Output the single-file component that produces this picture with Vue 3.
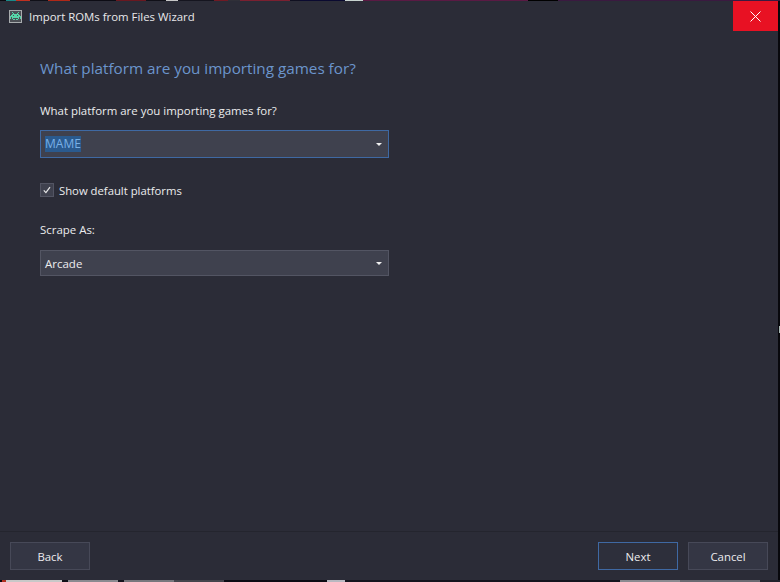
<script setup>
const topStrip = [
  ["#0a0a10", 6], ["#1a8a8a", 10], ["#c03020", 14], ["#101018", 18], ["#b02818", 22], ["#0c0c14", 46],
  ["#6a1820", 30], ["#101018", 20], ["#c8c8c8", 12], ["#15151f", 36], ["#701a24", 14], ["#303038", 12],
  ["#7a2030", 50], ["#101020", 10], ["#0a0a30", 45], ["#c8d4d0", 18], ["#5a1a44", 165], ["#000000", 30], ["#3a1a40", 222],
];
const bottomStrip = [
  ["#0a0a10", 2], ["#b03020", 4], ["#c8c8c8", 56], ["#101018", 6], ["#8a8a90", 50], ["#14141e", 6], ["#77777d", 50],
  ["#44444c", 50], ["#0c0c14", 103], ["#b8b8c0", 18], ["#14141e", 275], ["#8a8a90", 60], ["#6a6a72", 80], ["#20202a", 20],
];
const invader = [
  "..#.....#..",
  "...#...#...",
  "..#######..",
  ".##.###.##.",
  "###########",
  "#.#######.#",
  "#.#.....#.#",
  "...##.##...",
];
</script>

<template>
  <div class="page">
    <div class="strip top">
      <span v-for="(s, i) in topStrip" :key="i" :style="{ background: s[0], width: s[1] + 'px' }"></span>
    </div>
    <div class="middle">
      <div class="window">
        <header class="titlebar">
          <div class="app-icon">
            <svg width="11" height="8" viewBox="0 0 11 8" shape-rendering="crispEdges">
              <template v-for="(row, y) in invader" :key="y">
                <template v-for="(c, x) in row" :key="x">
                  <rect v-if="c === '#'" :x="x" :y="y" width="1" height="1" fill="#56d6a8" />
                </template>
              </template>
            </svg>
          </div>
          <span class="title">Import ROMs from Files Wizard</span>
          <div class="close">
            <svg width="11" height="11" viewBox="0 0 11 11">
              <path d="M0.5 0.5 L10.5 10.5 M10.5 0.5 L0.5 10.5" stroke="#fff" stroke-width="1" fill="none" />
            </svg>
          </div>
        </header>

        <main class="content">
          <h1 class="heading">What platform are you importing games for?</h1>
          <label class="label first">What platform are you importing games for?</label>
          <div class="combo focused">
            <span class="selected">MAME</span>
            <span class="caret"></span>
          </div>
          <div class="check-row">
            <span class="checkbox">
              <svg width="10" height="10" viewBox="0 0 10 10">
                <path d="M1.8 5.4 L3.9 7.6 L8 2.2" stroke="#e8e8e8" stroke-width="1.2" fill="none" />
              </svg>
            </span>
            <span class="check-label">Show default platforms</span>
          </div>
          <label class="label second">Scrape As:</label>
          <div class="combo">
            <span class="value">Arcade</span>
            <span class="caret"></span>
          </div>
        </main>

        <footer class="footer">
          <button class="btn">Back</button>
          <div class="right">
            <button class="btn primary">Next</button>
            <button class="btn">Cancel</button>
          </div>
        </footer>
      </div>
      <div class="edge"><span class="edge-mark"></span></div>
    </div>
    <div class="strip bottom">
      <span v-for="(s, i) in bottomStrip" :key="i" :style="{ background: s[0], width: s[1] + 'px' }"></span>
    </div>
  </div>
</template>

<style>
html, body {
  margin: 0;
  background: #000;
}
</style>

<style scoped>
.page {
  width: 780px;
  height: 582px;
  display: flex;
  flex-direction: column;
  overflow: hidden;
  font-family: "Open Sans", "Noto Sans", sans-serif;
  color: #e6e6e8;
}
.strip {
  display: flex;
  flex: none;
}
.strip.top {
  height: 1px;
}
.strip.bottom {
  height: 2px;
}
.middle {
  flex: 1;
  display: flex;
  min-height: 0;
}
.window {
  flex: 1;
  display: flex;
  flex-direction: column;
  background: #2b2c37;
}
.edge {
  width: 2px;
  background: #08080c;
  display: flex;
  justify-content: flex-end;
}
.edge-mark {
  width: 1px;
  height: 7px;
  margin-top: 325px;
  background: #a8b8b4;
}
.titlebar {
  height: 30px;
  flex: none;
  display: flex;
  align-items: center;
  padding-left: 9px;
}
.app-icon {
  width: 13px;
  height: 13px;
  box-sizing: border-box;
  border: 1px solid #a8acae;
  background: #4c4f55;
  display: flex;
  align-items: center;
  justify-content: center;
  margin-right: 7px;
}
.title {
  font-size: 11.4px;
  color: #e8e8ea;
}
.close {
  margin-left: auto;
  width: 45px;
  height: 30px;
  background: #e81123;
  display: flex;
  align-items: center;
  justify-content: center;
}
.content {
  flex: 1;
  padding: 0 40px;
  display: flex;
  flex-direction: column;
  align-items: flex-start;
}
.heading {
  margin: 26px 0 0;
  font-size: 15.25px;
  line-height: 22px;
  font-weight: 400;
  color: #6b95cc;
}
.label {
  font-size: 11.45px;
  line-height: 16px;
  color: #ececee;
}
.label.first {
  margin-top: 24px;
  margin-bottom: 11px;
}
.label.second {
  margin-top: 25px;
  margin-bottom: 12px;
}
.combo {
  width: 349px;
  height: 26px;
  box-sizing: border-box;
  background: #3f414e;
  border: 1px solid #535563;
  display: flex;
  align-items: center;
  justify-content: space-between;
  padding: 0 5px 0 4px;
  font-size: 11.5px;
  color: #ececee;
}
.combo.focused {
  height: 28px;
  border-color: #3f69a3;
}
.selected {
  background: #2a5a8e;
  color: #79b0e6;
  font-size: 12px;
  line-height: 16px;
}
.caret {
  width: 0;
  height: 0;
  border-left: 3px solid transparent;
  border-right: 3px solid transparent;
  border-top: 3px solid #f0f0f0;
  margin-right: 1px;
}
.check-row {
  display: flex;
  align-items: center;
  margin-top: 25px;
  height: 14px;
}
.checkbox {
  width: 14px;
  height: 14px;
  box-sizing: border-box;
  background: #3f414e;
  border: 1px solid #535563;
  display: flex;
  align-items: center;
  justify-content: center;
  margin-right: 5px;
}
.check-label {
  font-size: 11.3px;
  color: #ececee;
}
.footer {
  flex: none;
  height: 49px;
  box-sizing: border-box;
  border-top: 1px solid #24252e;
  display: flex;
  align-items: flex-start;
  justify-content: space-between;
  padding: 10px 10px 0;
}
.right {
  display: flex;
  gap: 10px;
}
.btn {
  width: 80px;
  height: 28px;
  box-sizing: border-box;
  background: #343644;
  border: 1px solid #474958;
  color: #ececee;
  font-family: inherit;
  font-size: 11.4px;
  padding: 0;
}
.btn.primary {
  background: #2d2f3b;
  border-color: #3f69a3;
}
</style>
